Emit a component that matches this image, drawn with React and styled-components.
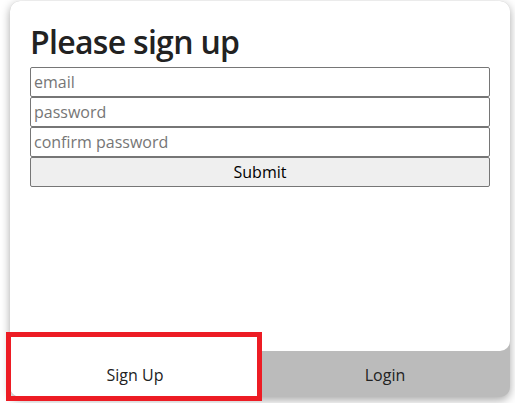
import styled, { createGlobalStyle } from "styled-components";

const GlobalStyle = createGlobalStyle`
  html, body {
    margin: 0;
    padding: 0;
    background: #ffffff;
    font-family: "Open Sans", "Noto Sans", sans-serif;
  }
`;

const Page = styled.div`
  padding: 1px 5px 6px 10px;
`;

const Card = styled.div`
  width: 500px;
  height: 396px;
  display: flex;
  flex-direction: column;
  background: #bbbbbb;
  border-radius: 10px;
  box-shadow: 0 3px 10px rgba(0, 0, 0, 0.35);
`;

const Body = styled.div`
  flex: 1;
  background: #ffffff;
  border-radius: 10px 10px 10px 0;
  padding: 20px 20px 0 20px;
`;

const Title = styled.h1`
  margin: 0 0 4px 0;
  font-size: 32px;
  font-weight: 600;
  line-height: 42px;
  letter-spacing: -0.7px;
  color: #222222;
`;

const Form = styled.form`
  display: flex;
  flex-direction: column;
`;

const Input = styled.input`
  box-sizing: border-box;
  height: 30px;
  width: 100%;
  margin: 0;
  padding: 0 3px;
  border: 1px solid #767676;
  border-radius: 2px;
  font-family: inherit;
  font-size: 16px;
  color: #222222;
  &::placeholder {
    color: #767676;
  }
`;

const Submit = styled.button`
  box-sizing: border-box;
  height: 30px;
  width: 100%;
  margin: 0;
  border: 1px solid #767676;
  border-radius: 2px;
  background: #efefef;
  font-family: inherit;
  font-size: 16px;
  color: #000000;
`;

const Tabs = styled.div`
  display: flex;
  height: 46px;
`;

const Tab = styled.button`
  position: relative;
  flex: 1;
  border: none;
  margin: 0;
  font-family: inherit;
  font-size: 16px;
  color: #222222;
  background: ${(p) => (p.active ? "#ffffff" : "transparent")};
  border-radius: ${(p) => (p.active ? "0 0 0 10px" : "0 0 10px 0")};
  padding-top: 2px;
  &::after {
    content: "";
    display: ${(p) => (p.active ? "block" : "none")};
    position: absolute;
    top: -19px;
    left: -4px;
    right: -2px;
    bottom: -4px;
    border: 5px solid #ed1c24;
    pointer-events: none;
  }
`;

export default function App() {
  return (
    <>
      <GlobalStyle />
      <Page>
        <Card>
          <Body>
            <Title>Please sign up</Title>
            <Form>
              <Input type="email" placeholder="email" />
              <Input type="password" placeholder="password" />
              <Input type="password" placeholder="confirm password" />
              <Submit type="button">Submit</Submit>
            </Form>
          </Body>
          <Tabs>
            <Tab active>Sign Up</Tab>
            <Tab>Login</Tab>
          </Tabs>
        </Card>
      </Page>
    </>
  );
}
